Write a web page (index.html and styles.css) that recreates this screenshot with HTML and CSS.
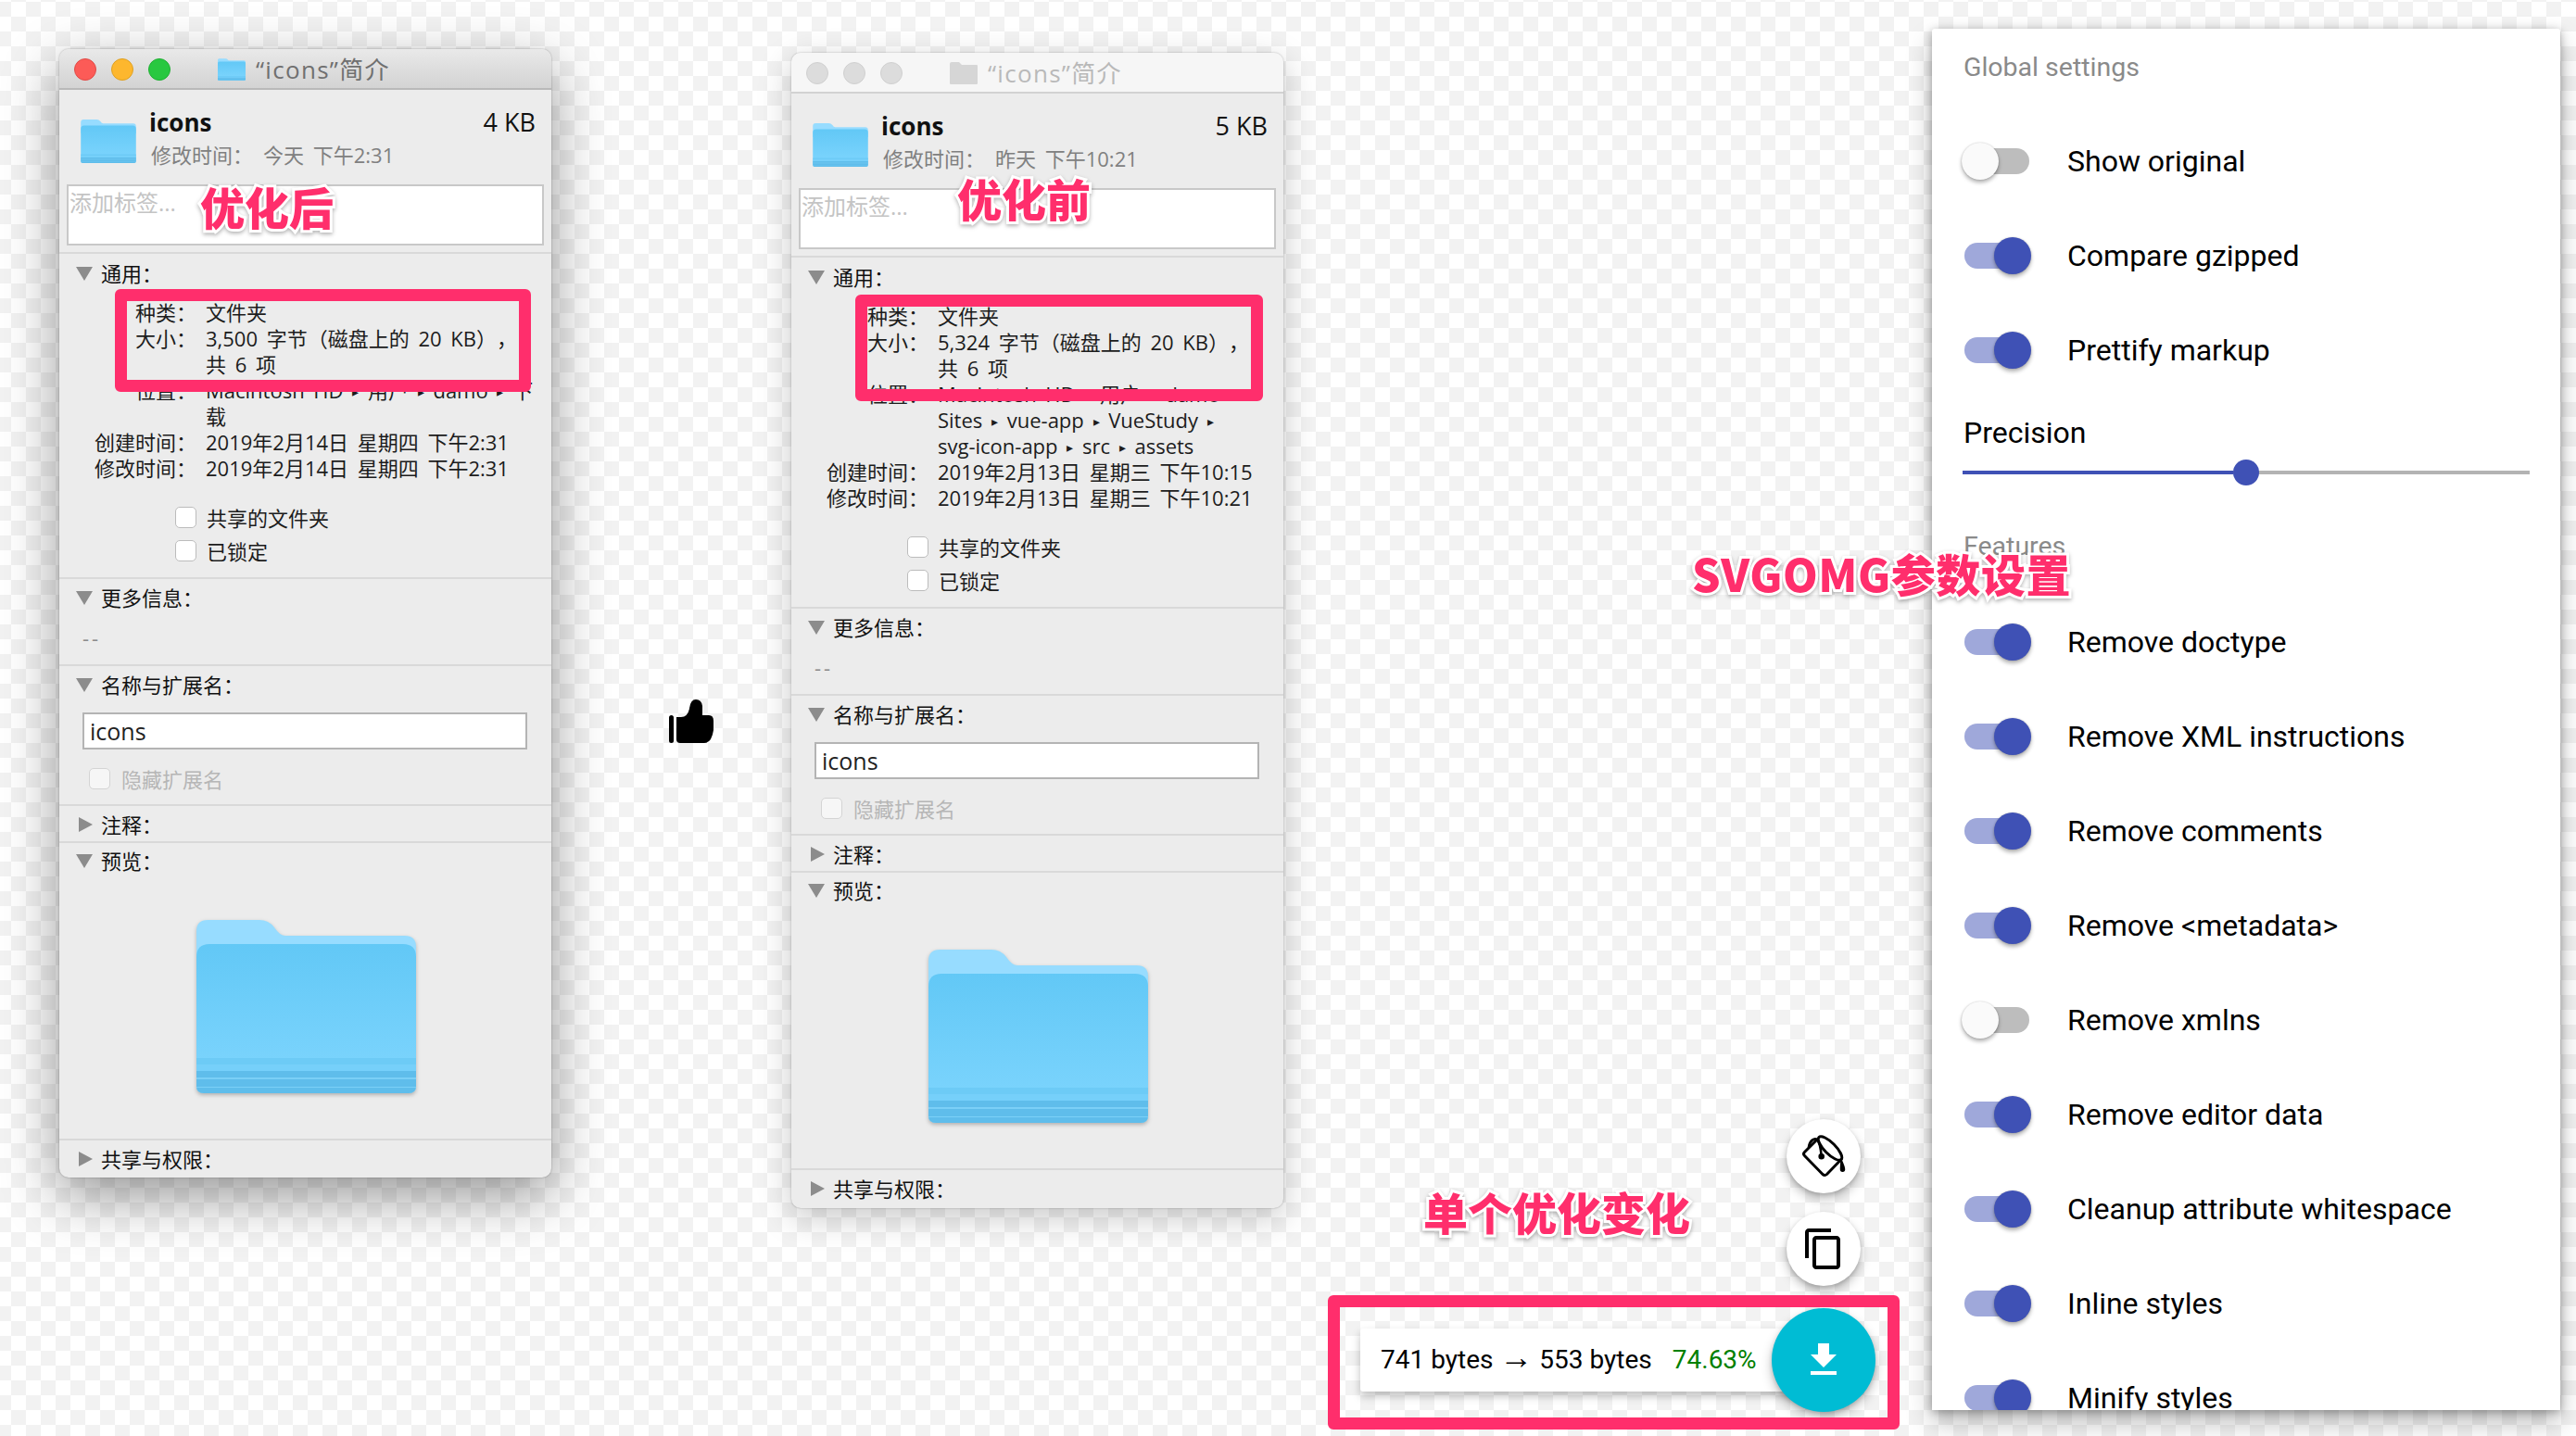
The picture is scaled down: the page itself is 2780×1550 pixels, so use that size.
FILE: index.html
```html
<!DOCTYPE html>
<html lang="zh-CN">
<head>
  <meta charset="utf-8">
  <title>SVG优化对比</title>
  <link rel="stylesheet" href="styles.css">
</head>
<body>

<svg class="defs" width="0" height="0">
  <defs>
    <linearGradient id="folderFront" x1="0" y1="0" x2="0" y2="1">
      <stop offset="0" stop-color="#62c8f6"/>
      <stop offset="1" stop-color="#80d6fe"/>
    </linearGradient>
    <symbol id="folder" viewBox="0 0 237 187">
      <path fill="#97dcff" d="M0 12Q0 0 12 0H68Q78 0 84 8Q90 17 96 17H225Q237 17 237 29V60H0Z"/>
      <path fill="url(#folderFront)" d="M0 40Q0 26 14 26H223Q237 26 237 40V179Q237 187 229 187H8Q0 187 0 179Z"/>
      <rect y="149" width="237" height="7" fill="#6dcbf6"/>
      <rect y="156" width="237" height="7" fill="#76d0fa"/>
      <path fill="#5fbdeb" d="M0 163H237V179Q237 187 229 187H8Q0 187 0 179Z"/>
      <rect y="170" width="237" height="2" fill="#7bd0f7"/>
      <rect y="180" width="237" height="1" fill="#7bd0f7"/>
    </symbol>
  </defs>
</svg>

<!-- 优化后 -->
<section class="window window-after">
  <div class="titlebar">
    <span class="light light-red"></span>
    <span class="light light-yellow"></span>
    <span class="light light-green"></span>
    <svg class="title-folder"><use href="#folder"/></svg>
    <span class="title-text">“icons”简介</span>
  </div>
  <div class="head">
    <svg class="head-folder"><use href="#folder"/></svg>
    <div class="head-info">
      <div class="head-line"><b class="head-name">icons</b><span class="head-size">4 KB</span></div>
      <div class="head-date"><span class="date-label">修改时间：</span><span>今天 下午2:31</span></div>
    </div>
  </div>
  <div class="tags"><div class="tag-field">添加标签...</div></div>

  <div class="panel panel-general">
    <div class="panel-title"><i class="tri-down"></i>通用：</div>
    <div class="info-grid">
      <span class="info-label">种类：</span><span class="info-value">文件夹</span>
      <span class="info-label">大小：</span><span class="info-value">3,500 字节（磁盘上的 20 KB），<br>共 6 项</span>
      <span class="info-label">位置：</span><span class="info-value">Macintosh HD <span class="sep">▸</span> 用户 <span class="sep">▸</span> damo <span class="sep">▸</span> 下<br>载</span>
      <span class="info-label">创建时间：</span><span class="info-value">2019年2月14日 星期四 下午2:31</span>
      <span class="info-label">修改时间：</span><span class="info-value">2019年2月14日 星期四 下午2:31</span>
    </div>
    <div class="checks">
      <label class="check"><i class="box"></i>共享的文件夹</label>
      <label class="check"><i class="box"></i>已锁定</label>
    </div>
  </div>

  <div class="panel panel-more">
    <div class="panel-title"><i class="tri-down"></i>更多信息：</div>
    <div class="more-dash">--</div>
  </div>

  <div class="panel panel-name">
    <div class="panel-title"><i class="tri-down"></i>名称与扩展名：</div>
    <div class="name-field">icons</div>
    <label class="check check-off"><i class="box"></i>隐藏扩展名</label>
  </div>

  <div class="panel panel-closed">
    <div class="panel-title"><i class="tri-right"></i>注释：</div>
  </div>

  <div class="panel panel-preview">
    <div class="panel-title"><i class="tri-down"></i>预览：</div>
    <svg class="preview-folder"><use href="#folder"/></svg>
  </div>

  <div class="panel panel-closed panel-last">
    <div class="panel-title"><i class="tri-right"></i>共享与权限：</div>
  </div>
</section>

<!-- 优化前 -->
<section class="window window-before">
  <div class="titlebar">
    <span class="light"></span>
    <span class="light"></span>
    <span class="light"></span>
    <svg class="title-folder" viewBox="0 0 30 24"><path fill="#d6d6d6" d="M0 2Q0 0 2 0H10L13 3H29Q30 3 30 4V23Q30 24 29 24H1Q0 24 0 23Z"/></svg>
    <span class="title-text">“icons”简介</span>
  </div>
  <div class="head">
    <svg class="head-folder"><use href="#folder"/></svg>
    <div class="head-info">
      <div class="head-line"><b class="head-name">icons</b><span class="head-size">5 KB</span></div>
      <div class="head-date"><span class="date-label">修改时间：</span><span>昨天 下午10:21</span></div>
    </div>
  </div>
  <div class="tags"><div class="tag-field">添加标签...</div></div>

  <div class="panel panel-general">
    <div class="panel-title"><i class="tri-down"></i>通用：</div>
    <div class="info-grid">
      <span class="info-label">种类：</span><span class="info-value">文件夹</span>
      <span class="info-label">大小：</span><span class="info-value">5,324 字节（磁盘上的 20 KB），<br>共 6 项</span>
      <span class="info-label">位置：</span><span class="info-value">Macintosh HD <span class="sep">▸</span> 用户 <span class="sep">▸</span> damo <span class="sep">▸</span><br>Sites <span class="sep">▸</span> vue-app <span class="sep">▸</span> VueStudy <span class="sep">▸</span><br>svg-icon-app <span class="sep">▸</span> src <span class="sep">▸</span> assets</span>
      <span class="info-label">创建时间：</span><span class="info-value">2019年2月13日 星期三 下午10:15</span>
      <span class="info-label">修改时间：</span><span class="info-value">2019年2月13日 星期三 下午10:21</span>
    </div>
    <div class="checks">
      <label class="check"><i class="box"></i>共享的文件夹</label>
      <label class="check"><i class="box"></i>已锁定</label>
    </div>
  </div>

  <div class="panel panel-more">
    <div class="panel-title"><i class="tri-down"></i>更多信息：</div>
    <div class="more-dash">--</div>
  </div>

  <div class="panel panel-name">
    <div class="panel-title"><i class="tri-down"></i>名称与扩展名：</div>
    <div class="name-field">icons</div>
    <label class="check check-off"><i class="box"></i>隐藏扩展名</label>
  </div>

  <div class="panel panel-closed">
    <div class="panel-title"><i class="tri-right"></i>注释：</div>
  </div>

  <div class="panel panel-preview">
    <div class="panel-title"><i class="tri-down"></i>预览：</div>
    <svg class="preview-folder"><use href="#folder"/></svg>
  </div>

  <div class="panel panel-closed panel-last">
    <div class="panel-title"><i class="tri-right"></i>共享与权限：</div>
  </div>
</section>

<!-- 大拇指 -->
<svg class="thumb" viewBox="0 0 48 48">
  <rect x="0" y="18" width="5" height="30" rx="2.5"/>
  <path d="M8 20H13Q20 20 22 11Q23 1 29 1Q35 1 36 8V18H43Q48 18 48 24V34Q46 48 38 48H12Q8 48 8 44Z"/>
</svg>

<!-- SVGOMG 设置面板 -->
<aside class="settings">
  <h2 class="settings-title">Global settings</h2>
  <div class="switch-row"><span class="switch"></span>Show original</div>
  <div class="switch-row"><span class="switch switch-on"></span>Compare gzipped</div>
  <div class="switch-row"><span class="switch switch-on"></span>Prettify markup</div>
  <div class="precision">
    <div>Precision</div>
    <div class="slider"><span class="slider-done"></span><span class="slider-thumb"></span></div>
  </div>
  <h2 class="settings-title settings-features">Features</h2>
  <div class="switch-row"><span class="switch switch-on"></span>Remove doctype</div>
  <div class="switch-row"><span class="switch switch-on"></span>Remove XML instructions</div>
  <div class="switch-row"><span class="switch switch-on"></span>Remove comments</div>
  <div class="switch-row"><span class="switch switch-on"></span>Remove &lt;metadata&gt;</div>
  <div class="switch-row"><span class="switch"></span>Remove xmlns</div>
  <div class="switch-row"><span class="switch switch-on"></span>Remove editor data</div>
  <div class="switch-row"><span class="switch switch-on"></span>Cleanup attribute whitespace</div>
  <div class="switch-row"><span class="switch switch-on"></span>Inline styles</div>
  <div class="switch-row"><span class="switch switch-on"></span>Minify styles</div>
</aside>

<!-- 悬浮按钮与结果 -->
<button class="fab fab-bucket">
  <svg viewBox="0 0 48 48" width="48" height="48" fill="none" stroke="#000" stroke-width="3" stroke-linejoin="round" stroke-linecap="round">
    <ellipse cx="31" cy="15.5" rx="17" ry="6" transform="rotate(45 31 15.500)"/>
    <path d="M17 6L3.500 19.500Q1.500 21.500 3.500 23.500L23 43.500Q25.300 45.500 27.500 43.500L43 27.500"/>
    <path d="M8 14C9 7 14 4 17 6C20 9 21 16 21.700 24" stroke-width="2.600"/>
    <circle cx="21.700" cy="24.300" r="1.800" fill="#000"/>
    <path d="M43 27.500C44 31 46.500 35 46.500 38C46.500 41 42.500 41 42.500 38C42.500 35 43 31 43 27.500Z" fill="#000" stroke-width="1.500"/>
  </svg>
</button>
<button class="fab fab-copy">
  <svg viewBox="0 0 24 24" width="48" height="48"><path d="M16 1H4c-1.100 0-2 .9-2 2v14h2V3h12V1zm3 4H8c-1.100 0-2 .9-2 2v14c0 1.100.9 2 2 2h11c1.100 0 2-.9 2-2V7c0-1.100-.9-2-2-2zm0 16H8V7h11v14z"/></svg>
</button>

<div class="results">741 bytes <span class="results-arrow">→</span> 553 bytes<span class="results-percent">74.63%</span></div>
<button class="fab fab-download">
  <svg viewBox="0 0 24 24" width="48" height="48"><path fill="#fff" d="M19 9h-4V3H9v6H5l7 7 7-7zM5 18v2h14v-2H5z"/></svg>
</button>

<!-- 标注 -->
<div class="frame frame-after"></div>
<div class="frame frame-before"></div>
<div class="frame frame-results"></div>
<div class="note note-after">优化后</div>
<div class="note note-before">优化前</div>
<div class="note note-svgomg">SVGOMG参数设置</div>
<div class="note note-single">单个优化变化</div>

</body>
</html>
```

FILE: styles.css
```css
* {
  box-sizing: border-box;
}

html, body {
  margin: 0;
  height: 100%;
}

body {
  position: relative;
  width: 2780px;
  height: 1550px;
  overflow: hidden;
  font-family: "Open Sans", "Noto Sans CJK SC", sans-serif;
  background: repeating-conic-gradient(#f2f2f2 0 25%, #fff 0 50%) 28px 18px / 32px 32px;
}

.defs {
  position: absolute;
}

/* mac 简介窗口 */
.window {
  position: absolute;
  width: 531px;
  display: flex;
  flex-direction: column;
  background: #ececec;
  border-radius: 10px;
  font-size: 22px;
  line-height: 28px;
  word-spacing: 4px;
  text-spacing-trim: space-all;
  color: #1c1c1c;
}

.window-after {
  left: 64px;
  top: 53px;
  height: 1218px;
  box-shadow: 0 20px 60px rgba(0, 0, 0, .42), 0 0 2px rgba(0, 0, 0, .35);
}

.window-before {
  left: 854px;
  top: 57px;
  height: 1247px;
  box-shadow: 0 10px 36px rgba(0, 0, 0, .22), 0 0 2px rgba(0, 0, 0, .3);
}

.titlebar {
  height: 44px;
  flex: none;
  display: flex;
  align-items: center;
  padding: 2px 0 0 16px;
  border-radius: 10px 10px 0 0;
  border-bottom: 2px solid #b9b9b9;
  background: linear-gradient(#e9e9e9, #d3d3d3);
}

.window-before .titlebar {
  background: #f6f6f6;
  border-bottom-color: #d2d2d2;
}

.light {
  width: 24px;
  height: 24px;
  margin-right: 16px;
  border-radius: 50%;
  background: #dcdcdc;
  border: 1px solid #d0d0d0;
}

.light-red { background: #fc5b57; border-color: #e04a46; }
.light-yellow { background: #fdb72e; border-color: #dea123; }
.light-green { background: #28c840; border-color: #1fb032; }

.title-folder {
  width: 30px;
  height: 24px;
  margin-left: 35px;
}

.title-text {
  margin-left: 11px;
  font-size: 26px;
  letter-spacing: 1.300px;
  color: #707070;
}

.window-before .title-text {
  color: #b9b9b9;
}

.head {
  display: flex;
  height: 102px;
  flex: none;
  padding: 17px 17px 0 23px;
}

.head-folder {
  width: 60px;
  height: 47px;
  margin-top: 15px;
  flex: none;
}

.head-info {
  flex: 1;
  margin-left: 14px;
}

.head-line {
  display: flex;
  justify-content: space-between;
  align-items: center;
  height: 36px;
  color: #111;
}

.head-name {
  font-size: 26px;
  font-weight: 700;
}

.head-size {
  font-size: 27px;
  word-spacing: 0;
}

.head-date {
  display: flex;
  margin-top: 3px;
  color: #808080;
}

.date-label {
  width: 121px;
  margin-left: 2px;
}

.tags {
  height: 75px;
  flex: none;
  padding: 0 8px;
  border-bottom: 2px solid #d9d9d9;
}

.tag-field {
  height: 66px;
  background: #fff;
  border: 2px solid #c8c8c8;
  font-size: 24px;
  line-height: 35px;
  color: #c4c4c4;
  padding-left: 1px;
}

.panel {
  flex: none;
  border-bottom: 2px solid #d9d9d9;
  padding-top: 6px;
}

.panel-title {
  display: flex;
  align-items: center;
  height: 28px;
  padding-left: 18px;
  color: #111;
}

.tri-down,
.tri-right {
  width: 0;
  height: 0;
  flex: none;
}

.tri-down {
  margin-right: 9px;
  border-left: 9px solid transparent;
  border-right: 9px solid transparent;
  border-top: 15px solid #8c8c8c;
}

.tri-right {
  margin: 0 9px 0 3px;
  border-top: 8px solid transparent;
  border-bottom: 8px solid transparent;
  border-left: 15px solid #8c8c8c;
}

.panel-general {
  height: 351px;
  padding-top: 7px;
}

.window-before .panel-general {
  height: 379px;
}

.info-grid {
  display: grid;
  grid-template-columns: 148px 1fr;
  column-gap: 10px;
  margin-top: 14px;
}

.info-label {
  text-align: right;
}

.sep {
  font-size: 14px;
  line-height: 0;
  vertical-align: 2px;
}

.checks {
  display: flex;
  flex-direction: column;
  gap: 13px;
  margin: 28px 0 0 125px;
}

.check {
  display: flex;
  align-items: center;
  height: 23px;
}

.box {
  width: 23px;
  height: 23px;
  margin-right: 11px;
  background: #fff;
  border: 1px solid #bcbcbc;
  border-radius: 5px;
}

.panel-more {
  height: 94px;
}

.more-dash {
  margin: 15px 0 0 25px;
  letter-spacing: 3px;
  color: #8c8c8c;
}

.panel-name {
  height: 151px;
}

.name-field {
  height: 40px;
  margin: 16px 26px 0 25px;
  background: #fff;
  border: 2px solid #b4b4b4;
  font-size: 25px;
  line-height: 36px;
  padding-left: 6px;
  color: #222;
}

.panel-name .check {
  margin: 20px 0 0 32px;
  color: #b6b6b6;
}

.check-off .box {
  background: #f6f6f6;
  border-color: #d4d4d4;
  margin-right: 12px;
}

.panel-closed {
  height: 40px;
}

.panel-preview {
  height: 321px;
  padding-top: 5px;
}

.preview-folder {
  display: block;
  width: 237px;
  height: 187px;
  margin: 50px 0 0 148px;
  filter: drop-shadow(0 2px 2px rgba(0, 0, 0, .25));
}

.panel-last {
  border-bottom: 0;
}

/* 大拇指 */
.thumb {
  position: absolute;
  left: 722px;
  top: 754px;
  width: 48px;
  height: 48px;
}

/* SVGOMG 设置 */
.settings {
  position: absolute;
  left: 2085px;
  top: 31px;
  width: 678px;
  height: 1491px;
  overflow: hidden;
  padding: 0 34px;
  background: #fff;
  font-family: Roboto, sans-serif;
  font-size: 32px;
  color: #000;
  box-shadow: 0 14px 28px rgba(0, 0, 0, .25), 0 2px 10px rgba(0, 0, 0, .3);
  border-radius: 3px 3px 0 0;
}

.settings-title {
  margin: 0;
  height: 92px;
  padding-top: 23px;
  line-height: 38px;
  font-size: 28.500px;
  font-weight: 400;
  color: #8a8a8a;
}

.settings-features {
  margin-top: 12px;
  height: 71px;
  padding-top: 0;
}

.switch-row {
  display: flex;
  align-items: center;
  height: 102px;
}

.switch {
  position: relative;
  flex: none;
  width: 70px;
  height: 28px;
  margin: 0 41px 0 1px;
  border-radius: 14px;
  background: #bdbdbd;
}

.switch::after {
  content: "";
  position: absolute;
  left: -3px;
  top: -6px;
  width: 40px;
  height: 40px;
  border-radius: 50%;
  background: #fafafa;
  box-shadow: 0 3px 4px rgba(0, 0, 0, .3), 0 0 2px rgba(0, 0, 0, .2);
}

.switch-on {
  background: #9fa8da;
}

.switch-on::after {
  left: 32px;
  background: #3f51b5;
}

.precision {
  height: 130px;
  padding-top: 19px;
  line-height: 38px;
}

.slider {
  position: relative;
  height: 4px;
  margin: 22px -1px 0 -1px;
  background: #b3b3b3;
}

.slider-done {
  display: block;
  height: 4px;
  width: 292px;
  background: #3f51b5;
}

.slider-thumb {
  position: absolute;
  left: 292px;
  top: -12px;
  width: 28px;
  height: 28px;
  border-radius: 50%;
  background: #3f51b5;
}

/* 悬浮按钮 */
.fab {
  position: absolute;
  padding: 0;
  border: 0;
  border-radius: 50%;
  display: flex;
  align-items: center;
  justify-content: center;
  background: #fff;
  box-shadow: 0 6px 12px rgba(0, 0, 0, .25), 0 2px 4px rgba(0, 0, 0, .15);
}

.fab-bucket {
  left: 1928px;
  top: 1208px;
  width: 80px;
  height: 80px;
}

.fab-copy {
  left: 1928px;
  top: 1308px;
  width: 80px;
  height: 80px;
}

.fab-download {
  left: 1912px;
  top: 1412px;
  width: 112px;
  height: 112px;
  background: #00bcd4;
}

.results {
  position: absolute;
  left: 1468px;
  top: 1434px;
  width: 500px;
  height: 68px;
  padding-left: 22px;
  background: #fff;
  font-family: Roboto, sans-serif;
  font-size: 28px;
  line-height: 68px;
  color: #000;
  box-shadow: 0 5px 10px rgba(0, 0, 0, .25);
  border-radius: 3px 0 0 3px;
}

.results-arrow {
  font-family: "Liberation Sans", sans-serif;
  font-size: 36px;
  line-height: 0;
}

.results-percent {
  margin-left: 22px;
  color: #008000;
}

/* 标注 */
.frame {
  position: absolute;
  border: 13px solid #ff2e6c;
  border-radius: 6px;
}

.frame-after {
  left: 124px;
  top: 312px;
  width: 449px;
  height: 111px;
}

.frame-before {
  left: 923px;
  top: 318px;
  width: 440px;
  height: 115px;
}

.frame-results {
  left: 1433px;
  top: 1398px;
  width: 617px;
  height: 145px;
}

.note {
  position: absolute;
  font-family: "Noto Sans CJK SC", sans-serif;
  font-size: 48px;
  font-weight: 900;
  line-height: 60px;
  white-space: nowrap;
  color: #ff2e6c;
  -webkit-text-stroke: 6px #fff;
  paint-order: stroke fill;
  filter: drop-shadow(0 2px 2px rgba(0, 0, 0, .3));
}

.note-after {
  left: 216px;
  top: 192px;
}

.note-before {
  left: 1033px;
  top: 183px;
}

.note-svgomg {
  left: 1826px;
  top: 588px;
  letter-spacing: .6px;
}

.note-single {
  left: 1536px;
  top: 1277px;
}
```
